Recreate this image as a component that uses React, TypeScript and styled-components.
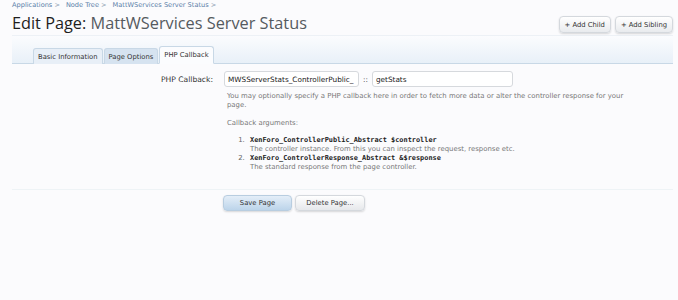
import React from "react";
import styled, {createGlobalStyle, css} from "styled-components";

const GlobalStyle = createGlobalStyle`
	html, body {
		margin: 0;
		padding: 0;
		background: #fbfbfd;
	}
	body {
		font-family: "DejaVu Sans", Verdana, sans-serif;
		color: #333;
	}
`;

const Page = styled.div`
	width: 678px;
	height: 300px;
	box-sizing: border-box;
	padding: 0 5px 0 12px;
	overflow: hidden;
`;

const Breadcrumb = styled.div`
	display: flex;
	gap: 6px;
	height: 10px;
	align-items: center;
	font-size: 6.6px;
	color: #5a7ea8;
`;

const Crumb = styled.span`
	&::after {
		content: " >";
		color: #8a9cb0;
	}
`;

const TitleBar = styled.div`
	display: flex;
	justify-content: space-between;
	align-items: center;
	height: 25px;
	border-bottom: 1px solid #edf1f6;
`;

const Title = styled.h1`
	margin: 0;
	font-family: "Open Sans", sans-serif;
	font-weight: 400;
	font-size: 16.3px;
	color: #1e1e1e;
`;

const TitleName = styled.span`
	color: #555a60;
`;

const TopActions = styled.div`
	display: flex;
	gap: 4px;
	margin-top: 4px;
`;

const buttonBase = css`
	font-family: "DejaVu Sans", Verdana, sans-serif;
	font-size: 6.8px;
	color: #333;
	border: 1px solid #d4d8dd;
	border-radius: 4px;
	box-shadow: 0 1px 2px rgba(0, 0, 0, 0.15);
	cursor: pointer;
`;

const SmallButton = styled.button`
	${buttonBase};
	height: 17px;
	padding: 0 5px;
	background: linear-gradient(#ffffff, #e9ebee);
`;

const TabStrip = styled.div`
	display: flex;
	align-items: flex-end;
	height: 27px;
	padding-left: 21px;
	border-bottom: 1px solid #c8d8e6;
	background: linear-gradient(to bottom, #fbfcfe 0%, #e8f0f8 100%);
`;

const Tab = styled.div<{ $active?: boolean; $hover?: boolean }>`
	height: 15px;
	display: flex;
	align-items: center;
	padding: 0 4px;
	margin-right: 1px;
	margin-bottom: -1px;
	font-size: 6.8px;
	color: #333;
	border: 1px solid #c8d8e6;
	border-bottom: none;
	border-radius: 3px 3px 0 0;
	background: ${p => p.$active ? "#fbfcfe" : p.$hover ? "#d6e3f0" : "#e8eff7"};
	${p => p.$active && css`
		height: 16px;
		border-bottom: 1px solid #fbfcfe;
	`}
`;

const FormArea = styled.div`
	padding: 7px 0 17px;
	border-bottom: 1px solid #eef3f6;
`;

const Row = styled.div`
	display: grid;
	grid-template-columns: 201px 1fr;
	column-gap: 11px;
`;

const Label = styled.label`
	text-align: right;
	font-size: 7.6px;
	line-height: 17px;
	color: #333;
`;

const Inputs = styled.div`
	display: flex;
	align-items: center;
	gap: 4px;
`;

const TextInput = styled.input<{ $width: number }>`
	width: ${p => p.$width}px;
	height: 16px;
	box-sizing: border-box;
	padding: 0 3px;
	border: 1px solid #d6d9dd;
	border-radius: 3px;
	background: #fff;
	font-family: "DejaVu Sans", Verdana, sans-serif;
	font-size: 7.3px;
	color: #222;
	outline: none;
`;

const Sep = styled.span`
	color: #555;
	font-size: 7.3px;
`;

const Explain = styled.div`
	padding: 5px 0 0 3px;
	font-size: 6.9px;
	line-height: 9px;
	color: #777;
	max-width: 402px;
`;

const Para = styled.p<{ $gap: number }>`
	margin: 0 0 ${p => p.$gap}px;
`;

const ArgList = styled.ol`
	margin: 0;
	padding-left: 20px;
`;

const Arg = styled.li`
	padding-left: 3px;
	&::marker {
		color: #666;
	}
`;

const Code = styled.code`
	display: block;
	font-family: "DejaVu Sans Mono", monospace;
	font-weight: bold;
	font-size: 6.9px;
	color: #222;
`;

const Footer = styled.div`
	display: flex;
	gap: 3px;
	padding: 5px 0 0 211px;
`;

const FormButton = styled.button<{ $primary?: boolean }>`
	${buttonBase};
	height: 16px;
	width: ${p => p.$primary ? 69 : 70}px;
	background: ${p => p.$primary
		? "linear-gradient(#e4eef8, #bcd4ea)"
		: "linear-gradient(#ffffff, #e6e8eb)"};
	border-color: ${p => p.$primary ? "#b8cde0" : "#d4d8dd"};
`;

const args = [
	{ code: "XenForo_ControllerPublic_Abstract $controller", text: "The controller instance. From this you can inspect the request, response etc." },
	{ code: "XenForo_ControllerResponse_Abstract &$response", text: "The standard response from the page controller." },
];

const App = () => (
	<Page>
		<GlobalStyle/>
		<Breadcrumb>
			<Crumb>Applications</Crumb>
			<Crumb>Node Tree</Crumb>
			<Crumb>MattWServices Server Status</Crumb>
		</Breadcrumb>
		<TitleBar>
			<Title>Edit Page: <TitleName>MattWServices Server Status</TitleName></Title>
			<TopActions>
				<SmallButton>+ Add Child</SmallButton>
				<SmallButton>+ Add Sibling</SmallButton>
			</TopActions>
		</TitleBar>
		<TabStrip>
			<Tab>Basic Information</Tab>
			<Tab $hover>Page Options</Tab>
			<Tab $active>PHP Callback</Tab>
		</TabStrip>
		<FormArea>
			<Row>
				<Label>PHP Callback:</Label>
				<div>
					<Inputs>
						<TextInput $width={135} defaultValue="MWSServerStats_ControllerPublic_"/>
						<Sep>::</Sep>
						<TextInput $width={141} defaultValue="getStats"/>
					</Inputs>
					<Explain>
						<Para $gap={9}>You may optionally specify a PHP callback here in order to fetch more data or alter the controller response for your page.</Para>
						<Para $gap={8}>Callback arguments:</Para>
						<ArgList>
							{args.map(a => (
								<Arg key={a.code}>
									<Code>{a.code}</Code>
									{a.text}
								</Arg>
							))}
						</ArgList>
					</Explain>
				</div>
			</Row>
		</FormArea>
		<Footer>
			<FormButton $primary>Save Page</FormButton>
			<FormButton>Delete Page...</FormButton>
		</Footer>
	</Page>
);

export default App;
